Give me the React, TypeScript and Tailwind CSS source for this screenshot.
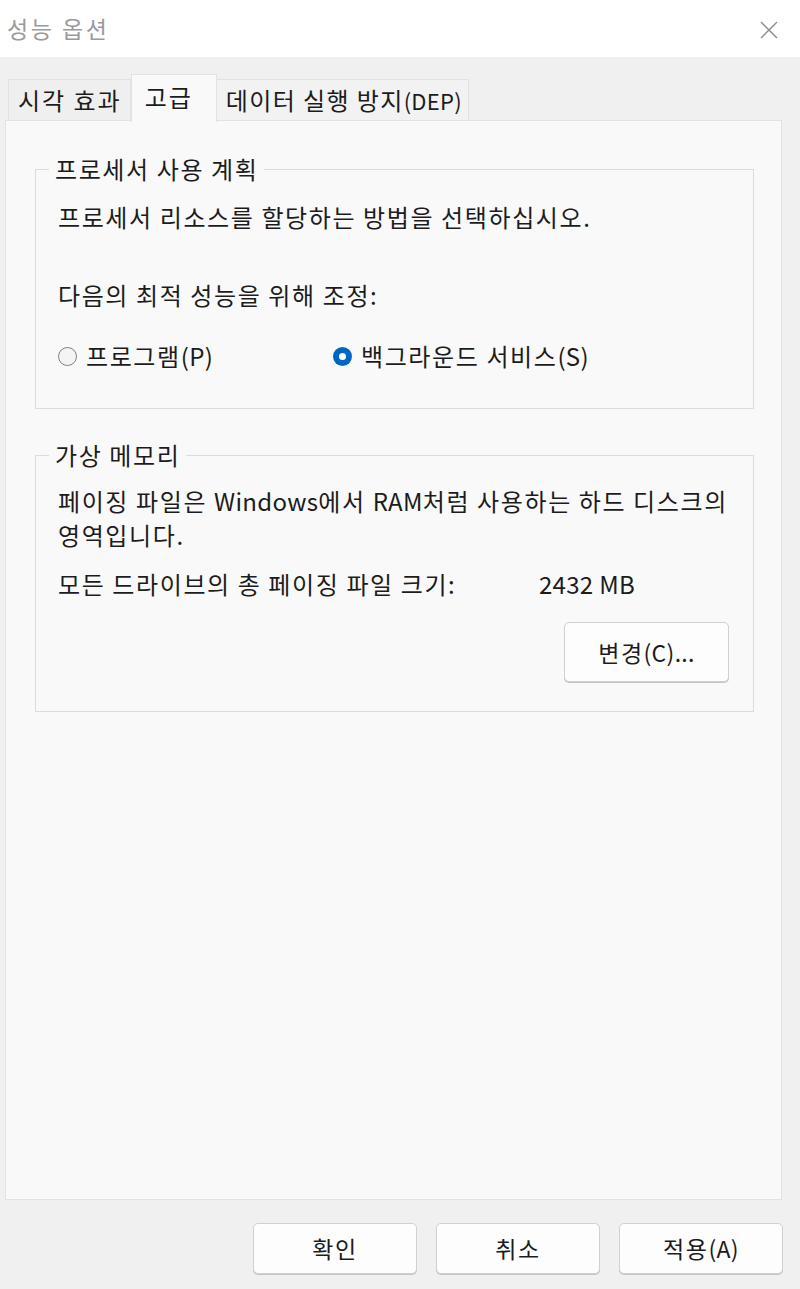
const font = {
  fontFamily: '"Noto Sans CJK KR", "Noto Sans", sans-serif',
};

// Latin runs are narrower than the hangul in the original UI font
function L({ children }: { children: React.ReactNode }) {
  return <span className="tracking-[0.3px]">{children}</span>;
}

function Radio({ checked, label }: { checked: boolean; label: React.ReactNode }) {
  return (
    <div className="flex items-center gap-[9px]">
      {checked ? (
        <span className="flex h-[19px] w-[19px] shrink-0 items-center justify-center rounded-full bg-[#0067c0]">
          <span className="h-[7px] w-[7px] rounded-full bg-white" />
        </span>
      ) : (
        <span className="h-[19px] w-[19px] shrink-0 rounded-full border-[1.5px] border-[#7f7f7f] bg-[#f4f4f4]" />
      )}
      <span>{label}</span>
    </div>
  );
}

function Group({
  title,
  children,
  className,
}: {
  title: string;
  children: React.ReactNode;
  className?: string;
}) {
  return (
    <fieldset
      className={`ml-[29px] mr-[27px] border border-[#dcdcdc] pl-[22px] pr-[16px] ${className ?? ""}`}
    >
      <legend className="-ml-[9px] px-[6px] leading-[30px] text-[#1c1c1c]">{title}</legend>
      {children}
    </fieldset>
  );
}

function DialogButton({ label, className }: { label: React.ReactNode; className?: string }) {
  return (
    <button
      type="button"
      className={`h-[51px] w-[164px] rounded-[5px] border border-[#d0d0d0] bg-[#fdfdfd] text-[23px] tracking-[1.5px] text-[#1c1c1c] shadow-[0_1px_0_#c4c4c4] ${className ?? ""}`}
    >
      {label}
    </button>
  );
}

export default function App() {
  return (
    <div
      className="flex h-[1289px] w-[800px] flex-col overflow-hidden bg-[#f0f0f0] text-[24px] tracking-[1.6px] text-[#1c1c1c] [word-break:keep-all]"
      style={font}
    >
      <div className="flex h-[57px] items-center justify-between bg-white pl-[7px] pr-[21px]">
        <span className="text-[23px] tracking-[2.5px] text-[#9a9a9a]">성능 옵션</span>
        <svg width="20" height="20" viewBox="0 0 20 20" className="mt-[2px]">
          <path d="M2 2 L18 18 M18 2 L2 18" stroke="#8c8c8c" strokeWidth="1.4" />
        </svg>
      </div>

      <div className="flex items-end pl-[8px] pt-[17px] tracking-[2px]">
        <div className="flex h-[41px] items-center border border-b-0 border-[#e2e2e2] bg-[#efefef] pl-[9px] pr-[8px]">
          시각 효과
        </div>
        <div className="relative z-10 -mb-[2px] flex h-[48px] w-[86px] items-center border border-b-0 border-[#e2e2e2] bg-[#f9f9f9] pb-[4px] pl-[13px]">
          고급
        </div>
        <div className="flex h-[41px] items-center border border-b-0 border-l-0 border-[#e2e2e2] bg-[#f2f2f2] pl-[9px] pr-[6px] tracking-[1.4px]">
          데이터 실행 방지
          <span className="text-[22px] tracking-[0.3px]">(DEP)</span>
        </div>
      </div>

      <div className="mx-[5px] flex h-[1080px] w-[777px] flex-col border border-[#e2e2e2] bg-[#f9f9f9] pt-[33px]">
        <Group title="프로세서 사용 계획" className="h-[255px]">
          <p className="mt-[16px] leading-[34px]">프로세서 리소스를 할당하는 방법을 선택하십시오.</p>
          <p className="mt-[44px] leading-[34px]">다음의 최적 성능을 위해 조정:</p>
          <div className="mt-[27px] flex leading-[34px]">
            <div className="w-[275px]">
              <Radio
                checked={false}
                label={
                  <>
                    프로그램<L>(P)</L>
                  </>
                }
              />
            </div>
            <Radio
              checked
              label={
                <>
                  백그라운드 서비스<L>(S)</L>
                </>
              }
            />
          </div>
        </Group>

        <Group title="가상 메모리" className="mt-[31px] h-[272px]">
          <p className="mt-[14px] leading-[34px]">
            페이징 파일은 <L>Windows</L>에서 <L>RAM</L>처럼 사용하는 하드 디스크의
            <br />
            영역입니다.
          </p>
          <div className="mt-[15px] flex leading-[34px]">
            <span className="w-[481px]">모든 드라이브의 총 페이징 파일 크기:</span>
            <L>2432 MB</L>
          </div>
          <div className="mt-[21px] flex justify-end pr-[8px]">
            <DialogButton
              label={
                <>
                  변경<L>(C)...</L>
                </>
              }
              className="h-[60px] w-[165px]"
            />
          </div>
        </Group>
      </div>

      <div className="mt-[23px] flex justify-end gap-[19px] pr-[17px]">
        <DialogButton label="확인" />
        <DialogButton label="취소" />
        <DialogButton
          label={
            <>
              적용<L>(A)</L>
            </>
          }
        />
      </div>
    </div>
  );
}
